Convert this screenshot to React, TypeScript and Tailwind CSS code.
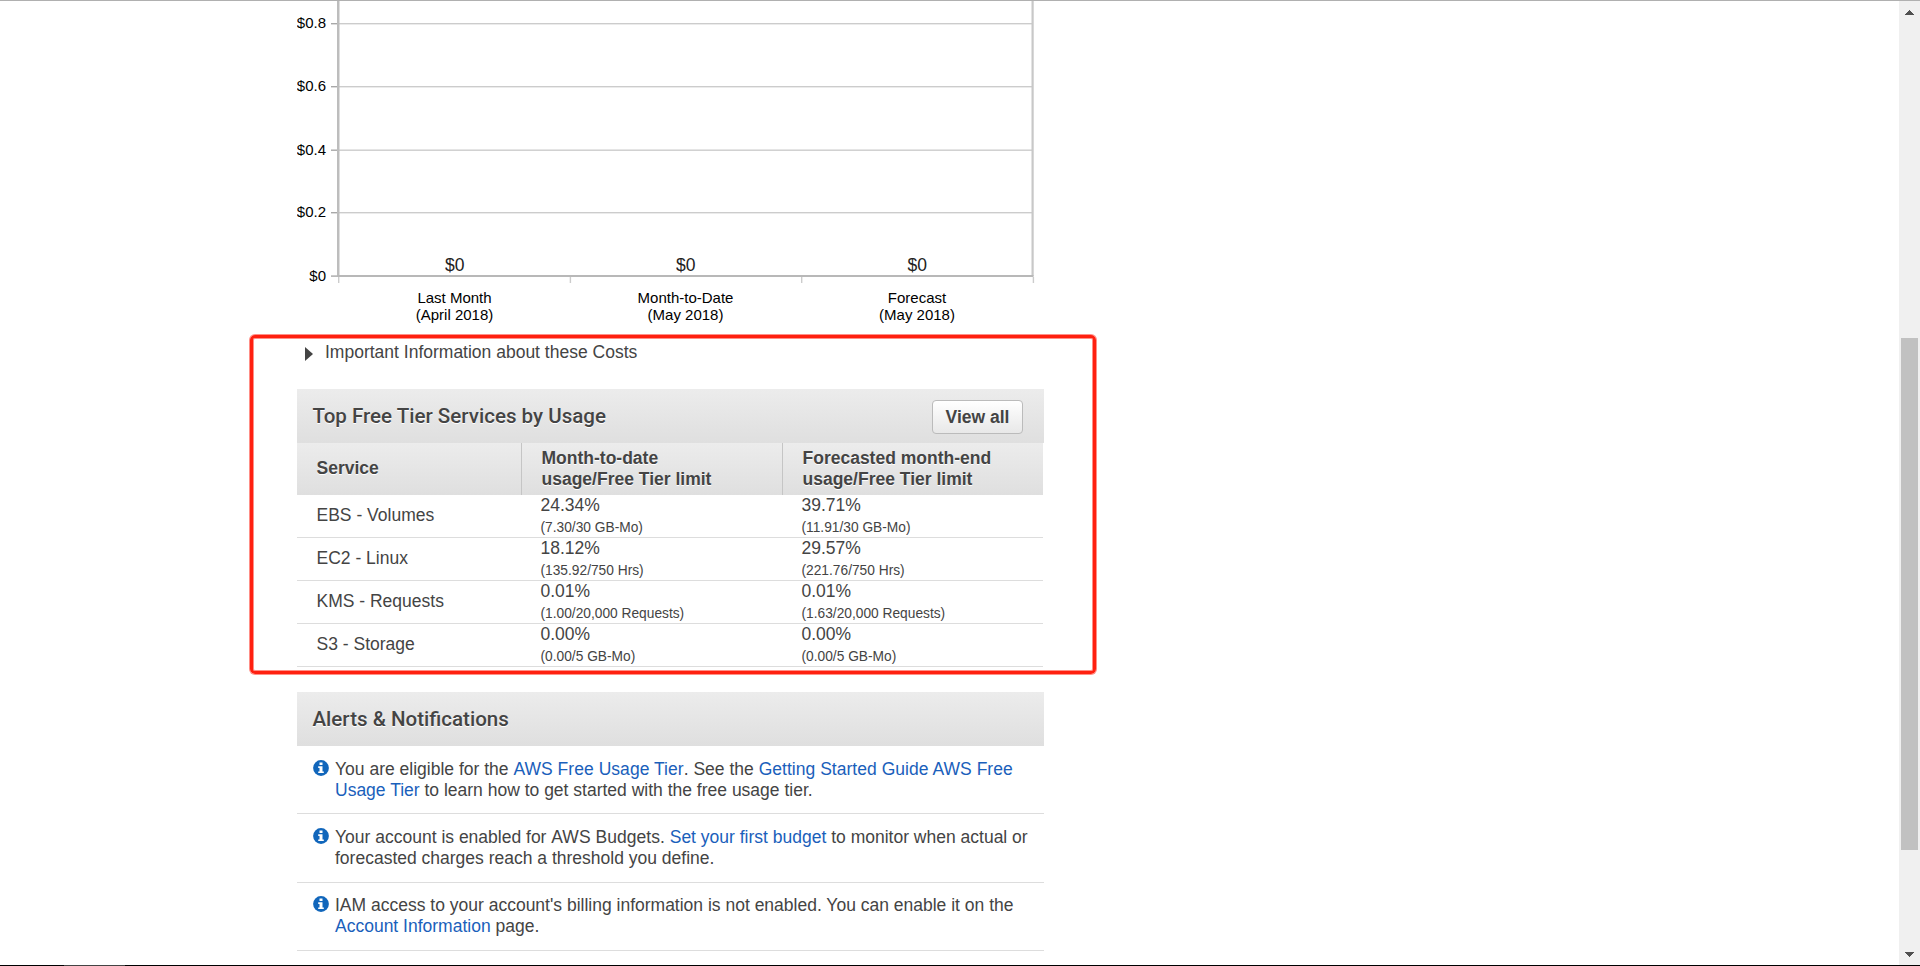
import type { ReactNode } from "react";

const months = [
  { x: 454.5, label: "Last Month", period: "(April 2018)" },
  { x: 685.5, label: "Month-to-Date", period: "(May 2018)" },
  { x: 917, label: "Forecast", period: "(May 2018)" },
];

const gridLines = [
  { y: 23.5, label: "$0.8" },
  { y: 86.5, label: "$0.6" },
  { y: 150, label: "$0.4" },
  { y: 212.5, label: "$0.2" },
];

const services = [
  { name: "EBS - Volumes", used: "24.34%", usedOf: "(7.30/30 GB-Mo)", forecast: "39.71%", forecastOf: "(11.91/30 GB-Mo)" },
  { name: "EC2 - Linux", used: "18.12%", usedOf: "(135.92/750 Hrs)", forecast: "29.57%", forecastOf: "(221.76/750 Hrs)" },
  { name: "KMS - Requests", used: "0.01%", usedOf: "(1.00/20,000 Requests)", forecast: "0.01%", forecastOf: "(1.63/20,000 Requests)" },
  { name: "S3 - Storage", used: "0.00%", usedOf: "(0.00/5 GB-Mo)", forecast: "0.00%", forecastOf: "(0.00/5 GB-Mo)" },
];

function CostChart() {
  return (
    <svg width="747" height="333" viewBox="297 1 747 333" className="block shrink-0 text-[15px]">
      {gridLines.map((g) => (
        <g key={g.label}>
          <rect x="339" y={g.y - 0.5} width="693" height="1.4" fill="#cccccc" />
          <rect x="331" y={g.y - 0.5} width="7" height="1.4" fill="#a8a8a8" />
          <text x="326" y={g.y + 4.5} textAnchor="end" fill="#000">{g.label}</text>
        </g>
      ))}
      <rect x="337" y="1" width="2.5" height="275" fill="#bdbdbd" />
      <rect x="1031.5" y="1" width="2.2" height="275" fill="#c8c8c8" />
      <rect x="331" y="275.4" width="7" height="1.4" fill="#a8a8a8" />
      <rect x="337" y="275" width="696.5" height="2" fill="#b8b8b8" />
      {[338, 569.7, 801, 1032.7].map((x) => (
        <rect key={x} x={x} y="277" width="1.4" height="6" fill="#cccccc" />
      ))}
      <text x="326" y="280.5" textAnchor="end" fill="#000">$0</text>
      {months.map((m) => (
        <g key={m.label} textAnchor="middle" fill="#000">
          <text x={m.x + 0.3} y="270.5" fill="#222" className="text-[17.5px]">$0</text>
          <text x={m.x} y="303">{m.label}</text>
          <text x={m.x} y="320">{m.period}</text>
        </g>
      ))}
    </svg>
  );
}

function PanelHeader({ title, children }: { title: string; children?: ReactNode }) {
  return (
    <div className="flex h-[54px] w-[747px] shrink-0 items-center justify-between bg-linear-to-b from-[#ececec] to-[#dfdfdf] pr-[21px] pl-[15.5px]">
      <h2 className="font-['Roboto',sans-serif] text-[20.55px] font-medium [text-shadow:0_1px_0_#fff]">{title}</h2>
      {children}
    </div>
  );
}

function Usage({ value, detail }: { value: string; detail: string }) {
  return (
    <div className="flex flex-col pl-[19.5px]">
      <span className="h-[22px] leading-[21px]">{value}</span>
      <span className="h-5 text-[13.75px] leading-[22px]">{detail}</span>
    </div>
  );
}

function Alert({ children, className }: { children: ReactNode; className: string }) {
  return (
    <li className={`flex border-b border-[#dddddd] pl-4 ${className}`}>
      <svg width="16" height="16" viewBox="0 0 16 16" className="mt-px mr-[6px] shrink-0">
        <circle cx="8" cy="8" r="7.9" fill="#1166bb" />
        <path d="M6.5 2.5h3v2.4h-3zM5.2 6.3h4.3v5.2h1.3v1.6H5.2v-1.6h1.3V7.9H5.2z" fill="#fff" />
      </svg>
      <p className="whitespace-nowrap">{children}</p>
    </li>
  );
}

function Link({ children, className = "" }: { children: ReactNode; className?: string }) {
  return <a className={`text-[#1a60bb] ${className}`}>{children}</a>;
}

export default function App() {
  return (
    <div className="relative flex h-[966px] w-[1920px] flex-col overflow-hidden border-t border-[#b0b0b0] bg-white font-['Liberation_Sans',Arial,sans-serif] text-[17.5px] leading-[21px] text-[#444444]">
      <div className="flex h-[964px] shrink-0 justify-between">
        <main className="ml-[297px] flex w-[747px] flex-col">
          <CostChart />
          <div className="flex h-[55px] shrink-0 items-start pt-2 pl-2">
            <svg width="8" height="14" viewBox="0 0 8 14" className="mt-[5px] mr-[12px]">
              <path d="M0 0L8 7L0 14z" fill="#444" />
            </svg>
            <span>Important Information about these Costs</span>
          </div>

          <PanelHeader title="Top Free Tier Services by Usage">
            <button className="mt-px h-[34px] w-[91px] rounded-[4px] border border-[#bbbbbb] bg-linear-to-b from-white to-[#e8e8e8] pt-[2px] font-bold">
              View all
            </button>
          </PanelHeader>
          <div className="grid h-[52px] w-[746px] shrink-0 grid-cols-[224px_261px_261px] items-center bg-linear-to-b from-[#ececec] to-[#dfdfdf] font-bold [text-shadow:0_1px_0_#fff]">
            <span className="pb-[2px] pl-[19.5px]">Service</span>
            <span className="flex h-full items-center border-l border-[#c5c5c5] pl-[19.5px]">
              <span>Month-to-date<br />usage/Free Tier limit</span>
            </span>
            <span className="flex h-full items-center border-l border-[#c5c5c5] pl-[19.5px]">
              <span>Forecasted month-end<br />usage/Free Tier limit</span>
            </span>
          </div>
          {services.map((s) => (
            <div key={s.name} className="grid h-[43px] w-[746px] shrink-0 grid-cols-[224px_261px_261px] items-center border-b border-[#dddddd]">
              <span className="pb-[2px] pl-[19.5px]">{s.name}</span>
              <Usage value={s.used} detail={s.usedOf} />
              <Usage value={s.forecast} detail={s.forecastOf} />
            </div>
          ))}

          <div className="h-[25px] shrink-0" />
          <PanelHeader title="Alerts & Notifications" />
          <ul className="flex flex-col">
            <Alert className="h-[68px] pt-[13px]">
              You are eligible for the <Link className="tracking-[0.04px]">AWS Free Usage Tier</Link>. See the{" "}
              <Link><span className="tracking-[0.03px]">Getting Started Guide AWS Free</span>
              <br />Usage Tier</Link> to learn how to get started with the free usage tier.
            </Alert>
            <Alert className="h-[69px] pt-[13px]">
              Your account is enabled for <span className="tracking-[0.03px]">AWS Budgets.</span> <Link>Set your first budget</Link> to monitor when actual or
              <br />forecasted charges reach a threshold you define.
            </Alert>
            <Alert className="h-[68px] pt-[12px]">
              IAM access to your account's billing information is not enabled. You can enable it on the
              <br /><Link>Account Information</Link> page.
            </Alert>
          </ul>
        </main>

        <div className="flex w-[21px] flex-col items-center bg-[#f0f0f0]">
          <svg width="9" height="5" viewBox="0 0 9 5" className="mt-[9px]">
            <path d="M4 0h1v1h1v1h1v1h1v1h1v1H0V4h1V3h1V2h1V1h1z" fill="#505050" />
          </svg>
          <div className="mt-[323px] h-[512px] w-[17px] bg-[#c1c1c1]" />
          <svg width="9" height="5" viewBox="0 0 9 5" className="mt-[102px]">
            <path d="M4 5h1V4h1V3h1V2h1V1h1V0H0v1h1v1h1v1h1v1h1z" fill="#505050" />
          </svg>
        </div>
      </div>

      <footer className="flex h-px shrink-0 bg-black pl-16">
        <div className="h-px w-[61px] bg-[#444]" />
      </footer>

      <div className="pointer-events-none absolute top-[334px] left-[250px] h-[339px] w-[846px] rounded-[5px] border-[3px] border-[#ff2010] shadow-[0_0_0_1px_rgba(255,32,16,0.5),inset_0_0_0_1px_rgba(255,32,16,0.5)]" />
    </div>
  );
}
